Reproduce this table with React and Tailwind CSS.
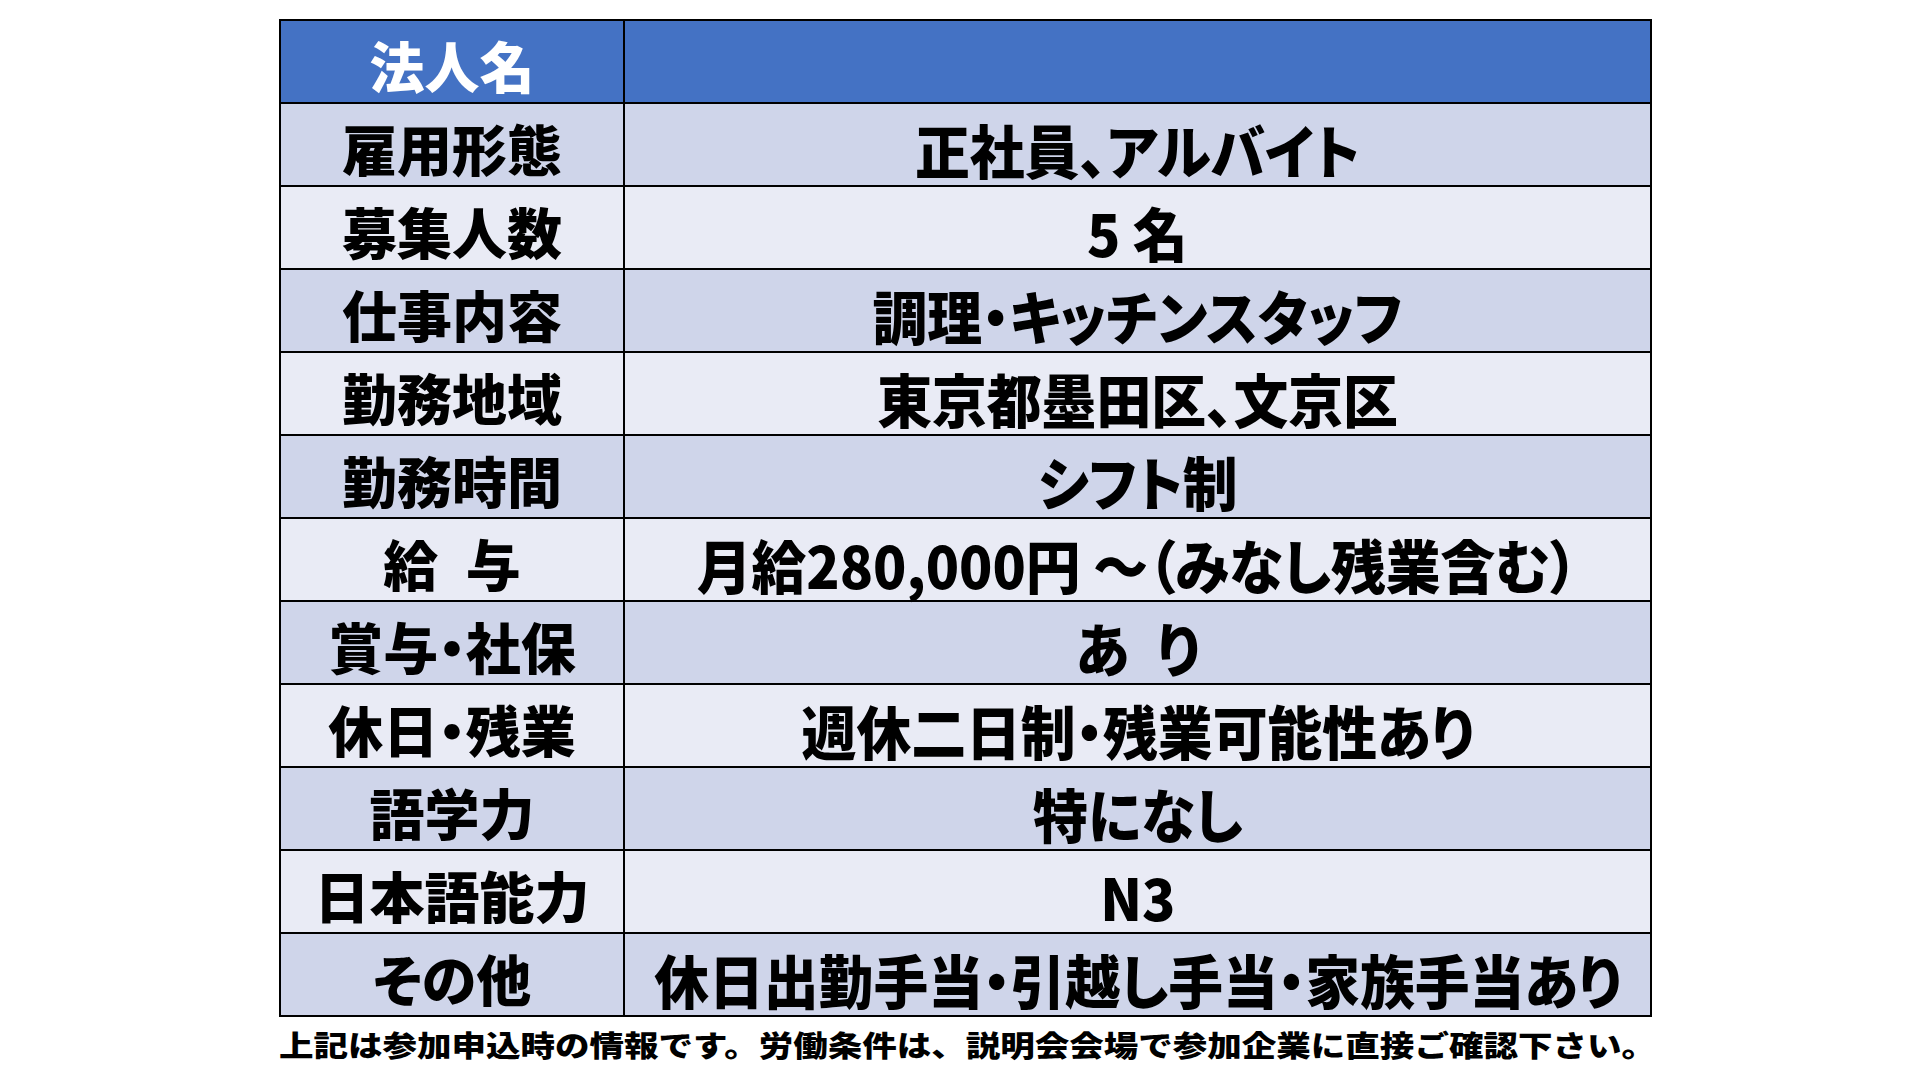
import React from 'react';

const rows = [
  { label: '雇用形態', value: '正社員、アルバイト' },
  { label: '募集人数', value: '5 名' },
  { label: '仕事内容', value: '調理・キッチンスタッフ' },
  { label: '勤務地域', value: '東京都墨田区、文京区' },
  { label: '勤務時間', value: 'シフト制' },
  { label: '給\u2002与', value: '月給280,000円 ～（みなし残業含む）' },
  { label: '賞与・社保', value: 'あ\u2002り' },
  { label: '休日・残業', value: '週休二日制・残業可能性あり' },
  { label: '語学力', value: '特になし' },
  { label: '日本語能力', value: 'N3' },
  { label: 'その他', value: '休日出勤手当・引越し手当・家族手当あり' },
];

const font = "font-['Noto_Sans_CJK_JP','Noto_Sans',sans-serif]";

const App = () => {
  return (
    <div className={`w-[1920px] h-[1080px] bg-white pl-[279px] pt-[19px] overflow-hidden ${font}`}>
      <div className="w-[1373px] border-x-2 border-b-2 border-black">
        <div className="flex h-[83px] border-t-2 border-black bg-[#4472C4]">
          <div className="w-[344px] border-r-2 border-black flex items-center justify-center pt-[6px]">
            <span className="text-white text-[55px] font-black leading-none [font-feature-settings:'palt']">法人名</span>
          </div>
          <div className="flex-1"></div>
        </div>
        {rows.map((r, i) => (
          <div
            key={r.label}
            className={`flex h-[83px] border-t-2 border-black ${i % 2 === 0 ? 'bg-[#CFD5EA]' : 'bg-[#E9EBF5]'}`}
          >
            <div className="w-[344px] border-r-2 border-black flex items-center justify-center pt-[6px]">
              <span className="text-black text-[55px] font-black leading-none whitespace-pre [font-feature-settings:'palt']">{r.label}</span>
            </div>
            <div className="flex-1 flex items-center justify-center pt-[8px]">
              <span className="text-black text-[58px] font-black leading-none scale-x-[0.945] whitespace-pre [font-feature-settings:'palt']">
                {r.value}
              </span>
            </div>
          </div>
        ))}
      </div>
      <div className="mt-[13px] w-fit text-[29px] font-black leading-none text-black whitespace-nowrap origin-left scale-x-[1.19]">
        上記は参加申込時の情報です。労働条件は、説明会会場で参加企業に直接ご確認下さい。
      </div>
    </div>
  );
};

export default App;
